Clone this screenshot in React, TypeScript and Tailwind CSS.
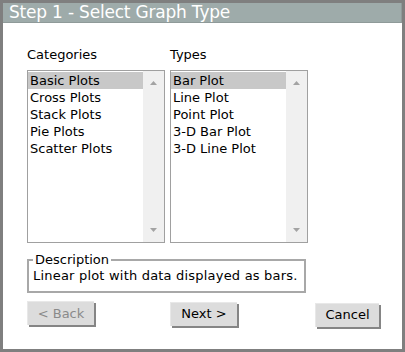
import React from 'react';

const categories = ['Basic Plots', 'Cross Plots', 'Stack Plots', 'Pie Plots', 'Scatter Plots'];
const types = ['Bar Plot', 'Line Plot', 'Point Plot', '3-D Bar Plot', '3-D Line Plot'];

function ListBox({ label, items, selected }: { label: string; items: string[]; selected: number }) {
  return (
    <div className="flex flex-col">
      <div className="h-[16px] text-[13px] leading-[16px]">{label}</div>
      <div className="mt-[7px] flex h-[173px] w-[138px] border border-[#a0a0a0] bg-white">
        <div className="flex-1 pt-px">
          {items.map((it, i) => (
            <div
              key={it}
              className={`h-[17px] pl-[2px] text-[13px] leading-[17px] ${i === selected ? 'bg-[#c8c8c8]' : ''}`}
            >
              {it}
            </div>
          ))}
        </div>
        <div className="flex w-[21px] flex-col justify-between bg-[#f0f0f0] py-[8px]">
          <svg width="21" height="6" viewBox="0 0 21 6">
            <path d="M7 6 L10.5 2 L14 6 Z" fill="#a3a3a3" />
          </svg>
          <svg width="21" height="6" viewBox="0 0 21 6">
            <path d="M7 0 L10.5 4 L14 0 Z" fill="#a3a3a3" />
          </svg>
        </div>
      </div>
    </div>
  );
}

function Btn({ children, w, disabled }: { children: React.ReactNode; w: string; disabled?: boolean }) {
  return (
    <button
      className={`h-[24px] ${w} border-t border-l border-[#e8e8e8] bg-[#dcdcdc] text-[13px] leading-[20px] shadow-[2px_2px_0_#858585] ${disabled ? 'text-[#8a8a8a]' : 'text-black'}`}
    >
      {children}
    </button>
  );
}

export default function App() {
  return (
    <div
      className="flex h-[352px] w-[405px] flex-col border-[3px] border-[#7f7f7f] bg-white text-black"
      style={{ fontFamily: '"DejaVu Sans", Verdana, sans-serif' }}
    >
      <div className="h-[20px] border-b border-r border-[#8f9a99] bg-[#9eabaa] pl-[6px] text-[17px] leading-[19px] tracking-[-0.2px] text-white">
        Step 1 - Select Graph Type
      </div>
      <div className="flex flex-1 flex-col pl-[24px] pt-[24px]">
        <div className="flex gap-[5px]">
          <ListBox label="Categories" items={categories} selected={0} />
          <ListBox label="Types" items={types} selected={0} />
        </div>
        <fieldset className="mt-[10px] h-[40px] w-[279px] border-2 border-[#a8a8a8] px-[4px] pb-[4px]">
          <legend className="px-[2px] text-[13px] leading-[14px]">Description</legend>
          <div className="text-[13px] leading-[17px] tracking-[0.2px]">Linear plot with data displayed as bars.</div>
        </fieldset>
        <div className="mt-[8px] flex">
          <Btn w="w-[67px]" disabled>
            &lt; Back
          </Btn>
          <div className="ml-[76px]">
            <Btn w="w-[67px]">Next &gt;</Btn>
          </div>
          <div className="ml-[78px] mt-px">
            <Btn w="w-[64px]">Cancel</Btn>
          </div>
        </div>
      </div>
    </div>
  );
}
